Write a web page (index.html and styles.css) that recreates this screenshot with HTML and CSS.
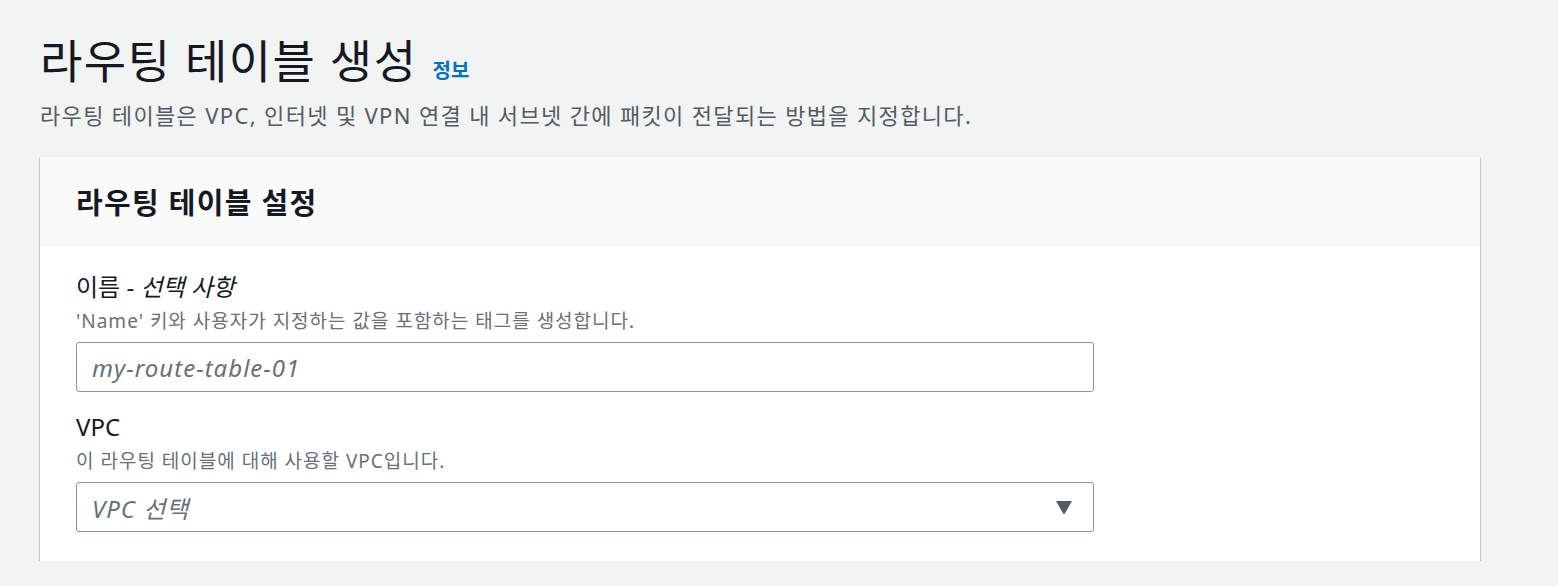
FILE: index.html
```html
<!DOCTYPE html>
<html lang="ko">
<head>
<meta charset="utf-8">
<link rel="stylesheet" href="styles.css">
</head>
<body>
<main class="page">
  <header class="page-header">
    <div class="title-row">
      <h1 class="title">라우팅 테이블 생성</h1>
      <a class="info-link" href="#">정보</a>
    </div>
    <p class="subtitle">라우팅 테이블은 VPC, 인터넷 및 VPN 연결 내 서브넷 간에 패킷이 전달되는 방법을 지정합니다.</p>
  </header>
  <section class="card">
    <div class="card-header">
      <h2 class="card-title">라우팅 테이블 설정</h2>
    </div>
    <div class="card-body">
      <div class="field">
        <div class="label">이름 - <em>선택 사항</em></div>
        <div class="desc">'Name' 키와 사용자가 지정하는 값을 포함하는 태그를 생성합니다.</div>
        <div class="control"><span class="placeholder">my-route-table-01</span></div>
      </div>
      <div class="field">
        <div class="label">VPC</div>
        <div class="desc">이 라우팅 테이블에 대해 사용할 VPC입니다.</div>
        <div class="control select">
          <span class="placeholder">VPC 선택</span>
          <svg class="caret" width="18" height="15" viewBox="0 0 18 15"><path d="M1 1 H17 L9.8 13.6 Q9 14.6 8.2 13.6 Z" fill="#545b64"/></svg>
        </div>
      </div>
    </div>
  </section>
</main>
</body>
</html>
```
FILE: styles.css
```css
html, body {
  margin: 0;
  padding: 0;
  background: #f2f3f3;
}
body {
  font-family: "Noto Sans", "Noto Sans CJK KR", sans-serif;
  color: #16191f;
}
.page {
  padding: 30px 78px 0 40px;
}
.title-row {
  display: flex;
  align-items: baseline;
  gap: 15px;
}
.title {
  margin: 0;
  font-size: 46px;
  letter-spacing: 1.5px;
  font-weight: 400;
  line-height: 60px;
  color: #16191f;
}
.info-link {
  font-size: 20px;
  font-weight: 700;
  color: #0073bb;
  text-decoration: none;
}
.subtitle {
  margin: 10px 0 0;
  font-size: 22px;
  letter-spacing: 1.35px;
  line-height: 30px;
  color: #545b64;
}
.card {
  margin-top: 27px;
  background: #fff;
  box-shadow: 0 1px 1px 0 rgba(0, 28, 36, 0.3), 1px 1px 1px 0 rgba(0, 28, 36, 0.15), -1px 1px 1px 0 rgba(0, 28, 36, 0.15);
}
.card-header {
  background: #fafafa;
  border-bottom: 1px solid #eaeded;
  height: 87px;
  padding: 0 36px;
  display: flex;
  align-items: center;
}
.card-title {
  margin: 0;
  font-size: 29px;
  letter-spacing: 1.3px;
  font-weight: 700;
  color: #16191f;
}
.card-body {
  padding: 27px 36px 29px;
  display: flex;
  flex-direction: column;
  gap: 20px;
}
.field {
  width: 1018px;
}
.label {
  font-size: 24px;
  line-height: 30px;
  color: #16191f;
}
.label em {
  font-style: italic;
}
.desc {
  margin-top: 6px;
  font-size: 19px;
  letter-spacing: 1px;
  line-height: 26px;
  color: #687078;
}
.control {
  margin-top: 8px;
  height: 48px;
  border: 1px solid #879596;
  border-radius: 3px;
  background: #fff;
  display: flex;
  align-items: center;
  padding: 0 20px 0 15px;
}
.placeholder {
  font-size: 24px;
  letter-spacing: 1px;
  font-style: italic;
  color: #687078;
}
.select {
  justify-content: space-between;
}
```
